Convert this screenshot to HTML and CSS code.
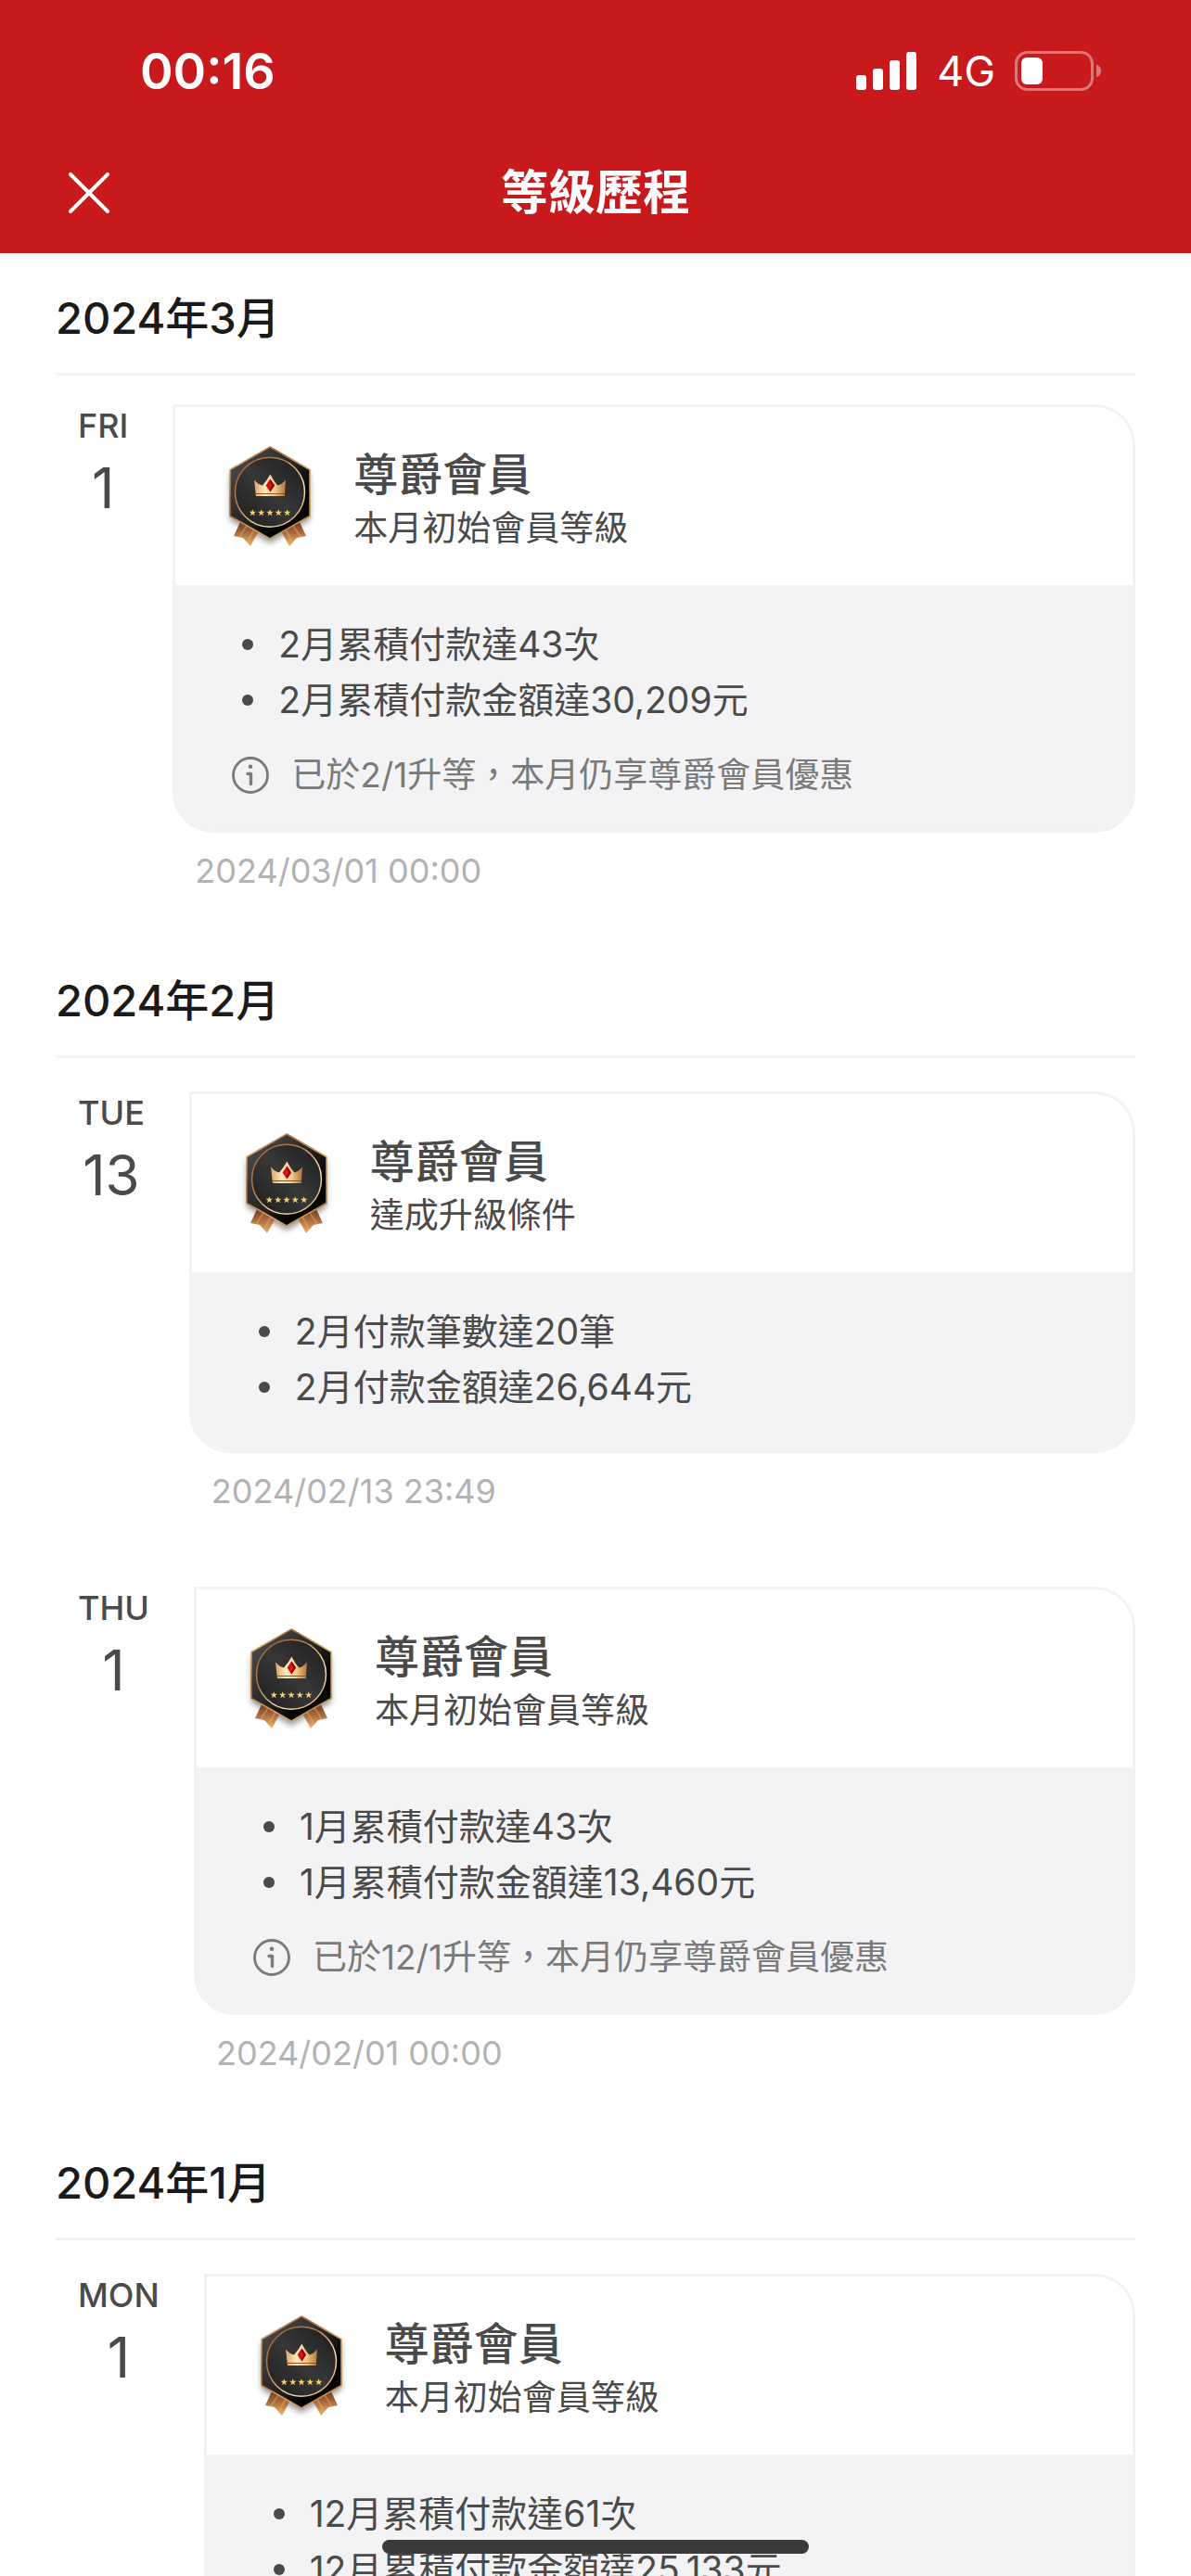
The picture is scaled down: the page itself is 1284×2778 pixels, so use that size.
FILE: index.html
```html
<!DOCTYPE html>
<html lang="zh-Hant">
<head>
  <meta charset="UTF-8">
  <meta name="viewport" content="width=device-width, initial-scale=1">
  <title>等級歷程</title>
  <link rel="stylesheet" href="styles.css">
</head>
<body>

  <!-- Shared symbols -->
  <svg class="symbols" aria-hidden="true">
    <defs>
      <linearGradient id="gold" x1="0" y1="0" x2="1" y2="1">
        <stop offset="0" stop-color="#f3cf94"/>
        <stop offset="0.3" stop-color="#a8672f"/>
        <stop offset="0.6" stop-color="#d9a863"/>
        <stop offset="1" stop-color="#b87a3c"/>
      </linearGradient>
      <linearGradient id="ring" x1="0" y1="0" x2="1" y2="1">
        <stop offset="0" stop-color="#9c5f2c"/>
        <stop offset="0.35" stop-color="#b87f4a"/>
        <stop offset="0.7" stop-color="#fbe3b4"/>
        <stop offset="1" stop-color="#c08a4e"/>
      </linearGradient>
      <linearGradient id="dark" x1="0" y1="0" x2="1" y2="1">
        <stop offset="0.1" stop-color="#4a4a4a"/>
        <stop offset="0.5" stop-color="#242424"/>
        <stop offset="0.75" stop-color="#000000"/>
        <stop offset="1" stop-color="#1a1a1a"/>
      </linearGradient>
      <linearGradient id="disc" x1="1" y1="0" x2="0" y2="1">
        <stop offset="0" stop-color="#1c1c1c"/>
        <stop offset="0.5" stop-color="#373737"/>
        <stop offset="1" stop-color="#1d1d1d"/>
      </linearGradient>
      <linearGradient id="crown" x1="0" y1="0" x2="1" y2="0">
        <stop offset="0" stop-color="#d9a768"/>
        <stop offset="0.35" stop-color="#ffe9bd"/>
        <stop offset="0.65" stop-color="#f3cd90"/>
        <stop offset="1" stop-color="#b0743c"/>
      </linearGradient>
      <linearGradient id="ribbon" x1="0" y1="0" x2="0" y2="1">
        <stop offset="0.1" stop-color="#7e4527"/>
        <stop offset="0.5" stop-color="#b07142"/>
        <stop offset="1" stop-color="#ecb768"/>
      </linearGradient>
      <filter id="shadow" x="-20%" y="-20%" width="140%" height="140%">
        <feGaussianBlur stdDeviation="3"/>
      </filter>
      <path id="star" d="M0-3.8 1-1.2 3.7-1.2 1.5.5 2.3 3.2 0 1.6-2.3 3.2-1.5.5-3.7-1.2-1-1.2Z"/>
    </defs>
    <symbol id="badge" viewBox="0 0 102 120">
      <path d="M51 12 94 36V86L51 111 8 86V36Z" fill="#000" opacity="0.4" filter="url(#shadow)"/>
      <path d="M19 88 12 103 22 105 30 114 39 98Z" fill="url(#ribbon)"/>
      <path d="M83 88 90 103 80 105 72 114 63 98Z" fill="url(#ribbon)"/>
      <path d="M26 92 18 104M34 96 27 109M76 92 84 104M68 96 75 109" stroke="#e9b273" stroke-width="2" opacity="0.4"/>
      <path d="M51 7 94 31.500V81.500L51 106 8 81.500V31.500Z" fill="url(#dark)" stroke="url(#gold)" stroke-width="1.500"/>
      <circle cx="51" cy="55.700" r="37.500" fill="url(#disc)" stroke="url(#ring)" stroke-width="1.500"/>
      <path d="M34 42.500C37 46 40 48 43 48.500 46 45 49 41 51.300 36.500 54 41 56 45 59.500 48.500 62 48 65 46 68 42.500L66.800 60H36Z" fill="url(#crown)"/>
      <path d="M35.800 57.500H66.900" stroke="#8f5526" stroke-width="1"/>
      <path d="M51.300 41.500 56 48.500 51.300 55.500 46.600 48.500Z" fill="#d30d12"/>
      <path d="M51.300 41.500 56 48.500 51.300 55.500Z" fill="#970408"/>
      <path d="M51.300 45.500 53 48.500 51.300 51.500 49.600 48.500Z" fill="#e01a1e"/>
      <g fill="#f8cf6b">
        <use href="#star" x="32.300" y="78"/>
        <use href="#star" x="41.700" y="78"/>
        <use href="#star" x="51" y="78"/>
        <use href="#star" x="60.300" y="78"/>
        <use href="#star" x="69.700" y="78"/>
      </g>
    </symbol>
    <symbol id="info" viewBox="0 0 40 40">
      <circle cx="20" cy="20" r="18.500" fill="none" stroke="currentColor" stroke-width="2.800"/>
      <circle cx="20" cy="10.800" r="2.300" fill="currentColor"/>
      <path d="M17 18.500H20.500V29.500" fill="none" stroke="currentColor" stroke-width="3.400" stroke-linecap="round" stroke-linejoin="round"/>
    </symbol>
  </svg>

  <div class="app">
    <header class="header">
      <div class="status-bar">
        <span class="time">00:16</span>
        <div class="status-icons">
          <svg class="signal" viewBox="0 0 66 42" aria-hidden="true">
            <rect x="0" y="25" width="11" height="16" rx="3"/>
            <rect x="18" y="18" width="11" height="23" rx="3"/>
            <rect x="36" y="9" width="11" height="32" rx="3"/>
            <rect x="54" y="0" width="11" height="41" rx="3"/>
          </svg>
          <span class="network">4G</span>
          <svg class="battery" viewBox="0 0 94 44" aria-hidden="true">
            <rect x="1.500" y="1.500" width="82" height="40" rx="12" fill="none" stroke="#fff" stroke-opacity="0.4" stroke-width="3"/>
            <path d="M88 14.500C95 17.500 95 25.500 88 28.500Z" fill="#fff" fill-opacity="0.4"/>
            <rect x="7" y="7" width="23" height="29" rx="6" fill="#fff"/>
          </svg>
        </div>
      </div>
      <div class="nav-bar">
        <button class="close-btn" type="button" aria-label="關閉">
          <svg viewBox="0 0 44 44" aria-hidden="true">
            <path d="M2 2 42 42M42 2 2 42"/>
          </svg>
        </button>
        <h1>等級歷程</h1>
      </div>
    </header>

    <main class="history">
      <section class="month">
        <h2>2024年3月</h2>
        <div class="entries">
          <article class="entry">
            <div class="day">
              <span class="weekday">FRI</span>
              <span class="date">1</span>
            </div>
            <div class="content">
              <div class="card">
                <div class="card-header">
                  <svg class="badge" aria-hidden="true"><use href="#badge"/></svg>
                  <div>
                    <h3>尊爵會員</h3>
                    <p class="reason">本月初始會員等級</p>
                  </div>
                </div>
                <div class="card-body">
                  <ul>
                    <li>2月累積付款達43次</li>
                    <li>2月累積付款金額達30,209元</li>
                  </ul>
                  <p class="note">
                    <svg class="info" aria-hidden="true"><use href="#info"/></svg>
                    已於2/1升等，本月仍享尊爵會員優惠
                  </p>
                </div>
              </div>
              <time class="timestamp">2024/03/01 00:00</time>
            </div>
          </article>
        </div>
      </section>

      <section class="month">
        <h2>2024年2月</h2>
        <div class="entries">
          <article class="entry">
            <div class="day">
              <span class="weekday">TUE</span>
              <span class="date">13</span>
            </div>
            <div class="content">
              <div class="card">
                <div class="card-header">
                  <svg class="badge" aria-hidden="true"><use href="#badge"/></svg>
                  <div>
                    <h3>尊爵會員</h3>
                    <p class="reason">達成升級條件</p>
                  </div>
                </div>
                <div class="card-body">
                  <ul>
                    <li>2月付款筆數達20筆</li>
                    <li>2月付款金額達26,644元</li>
                  </ul>
                </div>
              </div>
              <time class="timestamp">2024/02/13 23:49</time>
            </div>
          </article>

          <article class="entry">
            <div class="day">
              <span class="weekday">THU</span>
              <span class="date">1</span>
            </div>
            <div class="content">
              <div class="card">
                <div class="card-header">
                  <svg class="badge" aria-hidden="true"><use href="#badge"/></svg>
                  <div>
                    <h3>尊爵會員</h3>
                    <p class="reason">本月初始會員等級</p>
                  </div>
                </div>
                <div class="card-body">
                  <ul>
                    <li>1月累積付款達43次</li>
                    <li>1月累積付款金額達13,460元</li>
                  </ul>
                  <p class="note">
                    <svg class="info" aria-hidden="true"><use href="#info"/></svg>
                    已於12/1升等，本月仍享尊爵會員優惠
                  </p>
                </div>
              </div>
              <time class="timestamp">2024/02/01 00:00</time>
            </div>
          </article>
        </div>
      </section>

      <section class="month">
        <h2>2024年1月</h2>
        <div class="entries">
          <article class="entry">
            <div class="day">
              <span class="weekday">MON</span>
              <span class="date">1</span>
            </div>
            <div class="content">
              <div class="card">
                <div class="card-header">
                  <svg class="badge" aria-hidden="true"><use href="#badge"/></svg>
                  <div>
                    <h3>尊爵會員</h3>
                    <p class="reason">本月初始會員等級</p>
                  </div>
                </div>
                <div class="card-body">
                  <ul>
                    <li>12月累積付款達61次</li>
                    <li>12月累積付款金額達25,133元</li>
                  </ul>
                </div>
              </div>
            </div>
          </article>
        </div>
      </section>
    </main>
  </div>

  <div class="home-indicator"></div>

</body>
</html>
```
FILE: styles.css
```css
* {
  box-sizing: border-box;
}
body {
  margin: 0;
  font-family: Inter, "Noto Sans CJK TC", sans-serif;
  background-color: #fff;
  color: #4a4a4a;
}
h1, h2, h3, p, ul {
  margin: 0;
  padding: 0;
  font-weight: 400;
}
.symbols {
  position: absolute;
  width: 0;
  height: 0;
}
.app {
  display: flex;
  flex-direction: column;
  height: 100vh;
}

/* Header */
.header {
  flex: none;
  background-color: #c8191c;
  color: #fff;
}
.status-bar {
  display: flex;
  justify-content: space-between;
  align-items: center;
  padding: 47px 96px 0 151px;
}
.time {
  font-size: 54px;
  font-weight: 600;
  line-height: 60px;
}
.status-icons {
  display: flex;
  align-items: center;
  gap: 21px;
}
.signal {
  width: 66px;
  height: 42px;
  fill: #fff;
}
.network {
  font-size: 45px;
  font-weight: 400;
  line-height: 60px;
}
.battery {
  width: 94px;
  height: 44px;
}
.nav-bar {
  display: grid;
  grid-template-columns: 44px 1fr 44px;
  align-items: center;
  padding: 61px 74px 25px;
}
.close-btn {
  padding: 0;
  border: none;
  background: none;
  cursor: pointer;
}
.close-btn svg {
  display: block;
  width: 44px;
  height: 44px;
  fill: none;
  stroke: #fff;
  stroke-width: 4;
  stroke-linecap: round;
}
h1 {
  font-size: 51px;
  font-weight: 700;
  line-height: 80px;
  text-align: center;
}

/* Month groups */
.history {
  flex: 1;
  min-height: 0;
  overflow-y: auto;
  scrollbar-width: none;
}
.month {
  padding: 40px 60px 46px;
}
h2 {
  padding-bottom: 29px;
  border-bottom: 3px solid #f2f2f2;
  color: #1a1a1a;
  font-size: 47px;
  font-weight: 500;
  line-height: 60px;
}
.entries {
  display: flex;
  flex-direction: column;
  gap: 79px;
  padding-top: 36px;
}
.month:first-child .entries {
  padding-top: 31px;
}
.entry {
  display: flex;
  gap: 48px;
  padding-left: 24px;
}
.day {
  display: flex;
  flex-direction: column;
  align-items: center;
  gap: 8px;
}
.weekday {
  font-size: 36px;
  font-weight: 500;
  line-height: 46px;
}
.date {
  font-size: 60px;
  line-height: 72px;
}
.content {
  flex: 1;
}

/* Card */
.card {
  border: 3px solid #f2f2f2;
  border-radius: 0 44px 44px 44px;
  overflow: hidden;
}
.card-header {
  display: flex;
  align-items: center;
  gap: 39px;
  min-height: 192px;
  padding-left: 51px;
}
.badge {
  width: 102px;
  height: 120px;
}
h3 {
  font-size: 48px;
  font-weight: 500;
  line-height: 70px;
}
.reason {
  font-size: 37px;
  line-height: 46px;
}
.card-body {
  padding: 34px 61px 38px;
  background-color: #f3f3f6;
}
ul {
  list-style: none;
}
li {
  display: flex;
  align-items: center;
  gap: 27px;
  padding-left: 11px;
  font-size: 39px;
  line-height: 60px;
}
li::before {
  content: "";
  width: 12px;
  height: 12px;
  border-radius: 50%;
  background-color: #4a4a4a;
}
.note {
  display: flex;
  align-items: center;
  gap: 24px;
  margin-top: 30px;
  color: #7a7a7a;
  font-size: 37px;
  line-height: 42px;
}
.info {
  width: 40px;
  height: 40px;
}
.timestamp {
  display: block;
  margin-top: 17px;
  padding-left: 24px;
  color: #b2b2b2;
  font-size: 36px;
  line-height: 48px;
}

.home-indicator {
  position: fixed;
  bottom: 24px;
  left: 50%;
  width: 460px;
  height: 15px;
  margin-left: -230px;
  border-radius: 8px;
  background-color: #3a3a3a;
}
```
